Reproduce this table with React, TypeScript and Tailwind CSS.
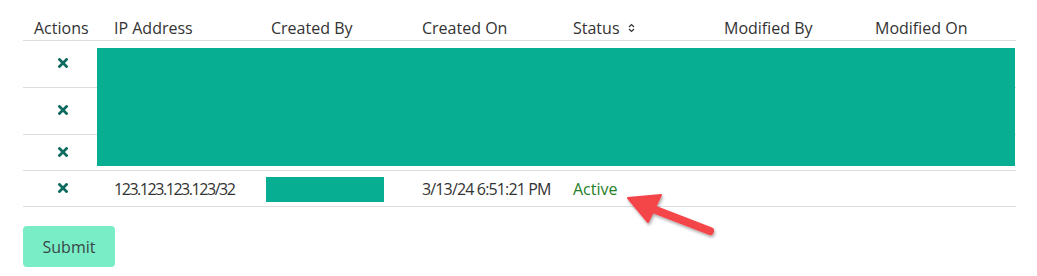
import React from "react";

const cols = "grid grid-cols-[80px_157px_151px_151px_151px_151px_152px]";

const RemoveIcon = () => (
  <svg width="10" height="10" viewBox="0 0 10 10" className="text-[#0e6b60]">
    <path d="M1.5 1.5 L8.5 8.5 M8.5 1.5 L1.5 8.5" stroke="currentColor" strokeWidth="2.7" strokeLinecap="square" />
  </svg>
);

const SortIcon = () => (
  <svg width="7" height="10" viewBox="0 0 7 10" className="ml-[8px] text-[#333]">
    <path d="M1 4 L3.5 1.5 L6 4 M1 6 L3.5 8.5 L6 6" stroke="currentColor" strokeWidth="1.2" fill="none" />
  </svg>
);

const headers = ["IP Address", "Created By", "Created On", "Status", "Modified By", "Modified On"];

const rows = [{ h: "h-[47px]" }, { h: "h-[47px]" }, { h: "h-[36px]" }];

const App = () => {
  return (
    <div className="relative w-[1037px] h-[276px] bg-white pl-[23px] text-[16px] text-[#333] font-['Open_Sans',sans-serif]">
      <div className="relative w-[993px]">
        {/* header */}
        <div className={`${cols} h-[41px] border-b border-[#dedede]`}>
          <div className="flex items-end pl-[11px]">Actions</div>
          {headers.map((h) => (
            <div key={h} className="flex items-end pl-[11px] whitespace-nowrap">
              <span className="flex items-center">
                {h}
                {h === "Status" && <SortIcon />}
              </span>
            </div>
          ))}
        </div>

        {/* redacted rows */}
        {rows.map((r, i) => (
          <div key={i} className={`${cols} ${r.h} border-b border-[#dedede]`}>
            <div className="flex items-center justify-center pb-[2px]">
              <RemoveIcon />
            </div>
          </div>
        ))}

        {/* last row */}
        <div className={`${cols} h-[36px] border-b border-[#dedede]`}>
          <div className="flex items-center justify-center pb-[2px]">
            <RemoveIcon />
          </div>
          <div className="flex items-center pl-[11px] whitespace-nowrap tracking-[-1.45px]">
            123.123.123.123/32
          </div>
          <div className="flex items-center pl-[6px]">
            <div className="w-[118px] h-[25px] bg-[#08ae92] mt-[1px]" />
          </div>
          <div className="flex items-center pl-[11px] whitespace-nowrap tracking-[-0.85px]">
            3/13/24 6:51:21 PM
          </div>
          <div className="flex items-center pl-[11px] text-[#1f801f]">Active</div>
          <div />
          <div />
        </div>

        {/* redaction overlay */}
        <div className="absolute left-[74px] top-[48px] w-[918px] h-[118px] bg-[#08ae92]" />
      </div>

      <button className="mt-[19px] w-[92px] h-[41px] rounded-[4px] bg-[#78edc6] text-[#3a4646] text-[16px]">
        Submit
      </button>

      {/* annotation arrow */}
      <svg
        width="110"
        height="60"
        viewBox="0 0 110 60"
        className="absolute left-[615px] top-[185px] overflow-visible"
      >
        <defs>
          <filter id="sh" x="-20%" y="-20%" width="150%" height="160%">
            <feDropShadow dx="1" dy="2" stdDeviation="1.5" floodColor="#000" floodOpacity="0.35" />
          </filter>
        </defs>
        <g filter="url(#sh)" fill="#f4444a" stroke="#f4444a">
          <path d="M38 24 L95 46" strokeWidth="8" strokeLinecap="round" />
          <path d="M13 13 L46 10 L33 37 Z" strokeWidth="2" strokeLinejoin="round" />
        </g>
      </svg>
    </div>
  );
};

export default App;
